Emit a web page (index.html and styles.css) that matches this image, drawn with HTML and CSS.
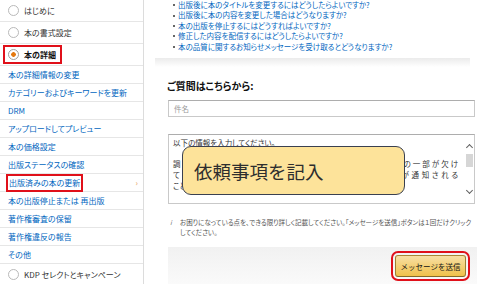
FILE: index.html
```html
<!DOCTYPE html>
<html lang="ja">
<head>
  <meta charset="UTF-8" />
  <meta name="viewport" content="width=device-width, initial-scale=1.0" />
  <title>KDP ヘルプ - お問い合わせ</title>
  <link rel="stylesheet" href="styles.css">
</head>
<body>
  <div class="page">
    <nav class="sidebar">
      <div class="step"><span class="radio"></span>はじめに</div>
      <div class="step"><span class="radio"></span>本の書式設定</div>
      <div class="step current"><span class="mark"><span class="radio on"></span>本の詳細</span></div>
      <a class="sub" href="#">本の詳細情報の変更</a>
      <a class="sub" href="#">カテゴリーおよびキーワードを更新</a>
      <a class="sub" href="#">DRM</a>
      <a class="sub" href="#">アップロードしてプレビュー</a>
      <a class="sub" href="#">本の価格設定</a>
      <a class="sub" href="#">出版ステータスの確認</a>
      <a class="sub active" href="#"><span class="marked">出版済みの本の更新</span><span class="chev">›</span></a>
      <a class="sub" href="#">本の出版停止または 再出版</a>
      <a class="sub" href="#">著作権審査の保留</a>
      <a class="sub" href="#">著作権違反の報告</a>
      <a class="sub" href="#">その他</a>
      <div class="step"><span class="radio"></span>KDP セレクトとキャンペーン</div>
    </nav>

    <main class="main">
      <ul class="faq">
        <li><a href="#">出版後に本のタイトルを変更するにはどうしたらよいですか?</a></li>
        <li><a href="#">出版後に本の内容を変更した場合はどうなりますか?</a></li>
        <li><a href="#">本の出版を停止するにはどうすればよいですか?</a></li>
        <li><a href="#">修正した内容を配信するにはどうしたらよいですか?</a></li>
        <li><a href="#">本の品質に関するお知らせメッセージを受け取るとどうなりますか?</a></li>
      </ul>
      <div class="shade"></div>

      <section class="form">
        <h2 class="form-title">ご質問はこちらから:</h2>
        <div class="field">件名</div>
        <div class="area">
          <div class="area-text">
            <div>以下の情報を入力してください。</div>
            <div>&nbsp;</div>
            <div class="just">調整が必要な箇所：出版済みの本の本文で挿入した画像の一部が欠け</div>
            <div class="just">ています。修正版をアップロードしたので読者に更新が通知される</div>
            <div>ことを希望します。</div>
          </div>
          <div class="scroll">
            <span class="arrow up"></span>
            <span class="thumb"></span>
            <span class="track"></span>
            <span class="arrow down"></span>
          </div>
          <div class="callout">依頼事項を記入</div>
        </div>
        <p class="note"><span class="info">i</span><span>お困りになっている点を、できる限り詳しく記載してください。「メッセージを送信」ボタンは１回だけクリックしてください。</span></p>
      </section>

      <div class="actions">
        <button class="send">メッセージを送信</button>
      </div>
    </main>
  </div>
</body>
</html>
```

FILE: styles.css
```css
:root {
  --link: #0066c0;
  --line: #e6e6e6;
  --red: #e0101a;
  --text: #333;
}

body {
  margin: 0;
  width: 480px;
  height: 284px;
  overflow: hidden;
  background: #fff;
  font-family: "Noto Sans CJK JP", "Liberation Sans", sans-serif;
  font-feature-settings: "palt";
  color: var(--text);
}

.page {
  display: flex;
  height: 284px;
}

/* sidebar */
.sidebar {
  width: 143px;
  flex-shrink: 0;
  display: flex;
  flex-direction: column;
  border-right: 1px solid #dcdcdc;
  font-size: 8px;
}

.step {
  height: 22px;
  flex-shrink: 0;
  display: flex;
  align-items: center;
  padding-left: 8px;
  border-bottom: 1px solid var(--line);
  box-sizing: border-box;
  color: var(--text);
}

.radio {
  width: 11px;
  height: 11px;
  margin-right: 5px;
  border: 1px solid #b9b9b9;
  border-radius: 50%;
  box-sizing: border-box;
  background: #fff;
}

.radio.on {
  border-color: #a0a0a0;
  background: radial-gradient(circle, #e47911 0 2px, #fff 2.6px);
}

.step.current {
  padding-left: 3px;
  font-weight: bold;
  color: #111;
}

.mark {
  display: flex;
  align-items: center;
  height: 19px;
  padding: 0 4px 0 3px;
  border: 2px solid var(--red);
  box-sizing: border-box;
}

.sub {
  height: 18px;
  flex-shrink: 0;
  display: flex;
  align-items: center;
  padding-left: 8px;
  border-bottom: 1px solid var(--line);
  box-sizing: border-box;
  color: var(--link);
  text-decoration: none;
}

.marked {
  padding: 2px 1px;
  line-height: 10px;
  outline: 2px solid var(--red);
}

.chev {
  margin-left: auto;
  margin-right: 5px;
  color: #e59a4a;
}

/* main */
.main {
  flex: 1;
  display: flex;
  flex-direction: column;
}

.faq {
  margin: 0;
  padding: 0 0 0 29px;
  list-style: none;
  font-size: 7.5px;
  line-height: 10.4px;
}

.faq li {
  display: flex;
  align-items: center;
}

.faq li::before {
  content: "";
  width: 2px;
  height: 2px;
  margin-right: 3px;
  background: #666;
}

.faq a {
  color: var(--link);
  text-decoration: none;
  white-space: nowrap;
}

.shade {
  height: 9px;
  margin: 6px 10px 0 11px;
  background: linear-gradient(#ebebeb, #fff);
}

.form {
  padding: 0 5px 0 24px;
}

.form-title {
  margin: 12px 0 0 -1px;
  font-size: 10px;
  line-height: 14px;
  color: #111;
}

.field {
  margin-top: 7px;
  height: 17px;
  display: flex;
  align-items: center;
  padding-left: 5px;
  border: 1px solid #c9c9c9;
  border-top-color: #adadad;
  box-sizing: border-box;
  font-size: 7.5px;
  color: #999;
}

.area {
  position: relative;
  display: flex;
  margin-top: 17px;
  height: 70px;
  border: 1px solid #c9c9c9;
  border-top-color: #adadad;
  box-sizing: border-box;
}

.area-text {
  flex: 1;
  padding: 3px 7px 0 4px;
  font-size: 7.5px;
  line-height: 10.7px;
  color: var(--text);
  overflow: hidden;
  white-space: nowrap;
}

.just {
  text-align: justify;
  text-align-last: justify;
}

.scroll {
  width: 9px;
  display: flex;
  flex-direction: column;
  align-items: center;
  padding: 9px 0 8px;
}

.arrow {
  width: 4px;
  height: 4px;
  border-left: 1.5px solid #606060;
  border-top: 1.5px solid #606060;
  transform: rotate(45deg);
}

.arrow.up {
  margin-top: 1px;
}

.arrow.down {
  transform: rotate(225deg);
  margin-bottom: 2px;
}

.thumb {
  width: 7px;
  height: 13px;
  margin-top: 4px;
  background: #d6d6d6;
}

.track {
  flex: 1;
}

.callout {
  position: absolute;
  left: 13px;
  top: 11px;
  width: 223px;
  height: 49px;
  display: flex;
  align-items: center;
  padding-left: 11px;
  box-sizing: border-box;
  border: 1.5px solid #3a4050;
  border-radius: 9px;
  background: #fde39a;
  font-size: 18.5px;
  font-feature-settings: normal;
  color: #2e2e2e;
}

.note {
  display: flex;
  margin: 13px 0 0;
  font-size: 6.5px;
  line-height: 10px;
  color: #555;
}

.info {
  width: 10px;
  flex-shrink: 0;
  padding-left: 2px;
  font-style: italic;
  color: #777;
}

.actions {
  display: flex;
  justify-content: flex-end;
  align-items: flex-start;
  flex: 1;
  margin: 10px 3px 0 24px;
  padding: 8px 11px 0 0;
  background: linear-gradient(#f1f1f1, #fafafa);
}

.send {
  width: 71px;
  height: 22px;
  padding: 0;
  border: 1px solid;
  border-color: #a88734 #9c7e31 #846a29;
  border-radius: 3px;
  background: linear-gradient(#f7dfa5, #f0c14b);
  font-family: inherit;
  font-size: 7.5px;
  color: #111;
  outline: 2px solid var(--red);
  outline-offset: 2px;
}
```
